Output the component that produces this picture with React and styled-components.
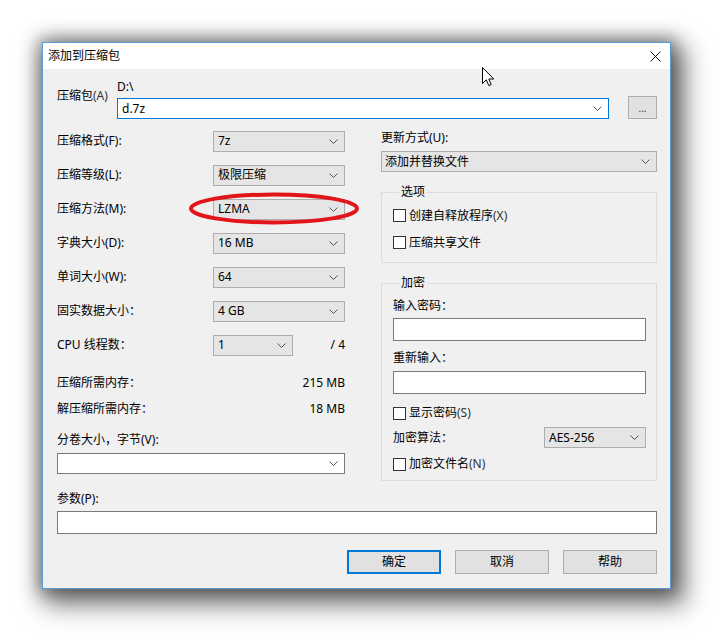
import React from 'react';
import styled, { createGlobalStyle } from 'styled-components';

const GlobalStyle = createGlobalStyle`
  html, body {
    margin: 0;
    background: #fff;
  }
  body {
    font-family: "Noto Sans", "Noto Sans CJK SC", sans-serif;
    font-size: 12px;
    color: #000;
  }
  * { box-sizing: border-box; }
`;

const Page = styled.div`
  min-height: 633px;
  padding: 42px 0 44px 42px;
`;

const Window = styled.div`
  position: relative;
  width: 629px;
  border: 1px solid #5b9bd5;
  background: #f0f0f0;
  box-shadow: 0 0 16px 4px rgba(0, 0, 0, 0.38), 8px 10px 24px 6px rgba(0, 0, 0, 0.5);
`;

const TitleBar = styled.div`
  height: 26px;
  background: #fff;
  display: flex;
  align-items: center;
  justify-content: space-between;
  padding-left: 5px;
  line-height: 16px;
`;

const CloseBox = styled.div`
  width: 30px;
  height: 26px;
  display: flex;
  align-items: center;
  justify-content: center;
`;

const Body = styled.div`
  padding: 11px 13px 14px 14px;
`;

const ArchiveRow = styled.div`
  display: flex;
  align-items: flex-start;
`;

const ArchiveLabel = styled.div`
  width: 60px;
  padding-top: 8px;
  line-height: 16px;
`;

const PathStack = styled.div`
  width: 492px;
  display: flex;
  flex-direction: column;
`;

const Drive = styled.div`
  line-height: 14px;
  height: 14px;
  margin-bottom: 4px;
`;

const Combo = styled.div`
  display: flex;
  align-items: center;
  justify-content: space-between;
  height: 21px;
  width: ${p => p.$width || '100%'};
  padding: 0 6px 0 ${p => p.$pad || 4}px;
  border: 1px solid ${p => (p.$focus ? '#0078d7' : p.$edit ? '#7a7a7a' : '#adadad')};
  background: ${p => (p.$edit ? '#fff' : '#e5e5e5')};
  line-height: 16px;
  flex-shrink: 0;
`;

const SmallButton = styled.div`
  margin: 16px 0 0 auto;
  width: 29px;
  height: 23px;
  border: 1px solid #adadad;
  background: #e1e1e1;
  display: flex;
  align-items: center;
  justify-content: center;
  font-size: 10px;
  color: #333;
`;

const Columns = styled.div`
  display: flex;
  align-items: flex-start;
  margin-top: 5px;
`;

const LeftCol = styled.div`
  width: 288px;
`;

const RightCol = styled.div`
  width: 276px;
  margin-left: auto;
`;

const FieldRow = styled.div`
  display: flex;
  align-items: center;
  height: 34px;
`;

const FieldLabel = styled.div`
  width: 156px;
  line-height: 16px;
`;

const Ratio = styled.div`
  margin-left: auto;
  line-height: 16px;
`;

const InfoRow = styled.div`
  display: flex;
  align-items: center;
  justify-content: space-between;
  height: 26px;
  line-height: 16px;
  margin-top: ${p => p.$gap || 0}px;
`;

const Caption = styled.div`
  line-height: 16px;
  margin-top: ${p => p.$gap || 0}px;
  margin-bottom: ${p => p.$after || 0}px;
`;

const Group = styled.fieldset`
  margin: ${p => p.$gap || 0}px 0 0;
  border: 1px solid #dcdcdc;
  padding: ${p => p.$padding};
  min-width: 0;
`;

const Legend = styled.legend`
  padding: 0 2px;
  margin-left: 6px;
  line-height: 16px;
`;

const CheckRow = styled.div`
  display: flex;
  align-items: center;
  height: ${p => p.$height || 20}px;
  margin-top: ${p => p.$gap || 0}px;
  line-height: 16px;
`;

const Box = styled.span`
  width: 13px;
  height: 13px;
  border: 1px solid #333;
  background: #fff;
  margin-right: 3px;
  flex-shrink: 0;
`;

const Hot = styled.span`
  color: #333;
`;

const TextInput = styled.div`
  height: ${p => p.$height || 23}px;
  border: 1px solid #7a7a7a;
  background: #fff;
  margin-top: ${p => p.$gap || 0}px;
`;

const AlgoRow = styled.div`
  display: flex;
  align-items: center;
  justify-content: space-between;
  height: 21px;
  margin-top: 4px;
  line-height: 16px;
`;

const Buttons = styled.div`
  display: flex;
  justify-content: flex-end;
  gap: 14px;
  margin-top: 16px;
`;

const Button = styled.div`
  width: 94px;
  height: 24px;
  display: flex;
  align-items: center;
  justify-content: center;
  background: #e1e1e1;
  border: ${p => (p.$primary ? '2px solid #0078d7' : '1px solid #adadad')};
  line-height: 16px;
`;

const Ellipse = styled.svg`
  position: absolute;
  left: 145px;
  top: 149px;
  pointer-events: none;
`;

const Pointer = styled.svg`
  position: absolute;
  left: 439px;
  top: 24px;
  pointer-events: none;
`;

function Chevron() {
  return (
    <svg width="9" height="5" viewBox="0 0 9 5">
      <path d="M0.5 0.5 L4.5 4.5 L8.5 0.5" fill="none" stroke="#555" strokeWidth="1" />
    </svg>
  );
}

function Select({ value, width, edit, focus, pad }) {
  return (
    <Combo $width={width} $edit={edit} $focus={focus} $pad={pad}>
      <span>{value}</span>
      <Chevron />
    </Combo>
  );
}

function Check({ label, hot, height, gap }) {
  return (
    <CheckRow $height={height} $gap={gap}>
      <Box />
      {label}
      {hot && <Hot>{hot}</Hot>}
    </CheckRow>
  );
}

const fields = [
  { label: '压缩格式(F):', value: '7z' },
  { label: '压缩等级(L):', value: '极限压缩' },
  { label: '压缩方法(M):', value: 'LZMA' },
  { label: '字典大小(D):', value: '16 MB' },
  { label: '单词大小(W):', value: '64' },
  { label: '固实数据大小：', value: '4 GB' },
];

export default function App() {
  return (
    <Page>
      <GlobalStyle />
      <Window>
        <TitleBar>
          <span>添加到压缩包</span>
          <CloseBox>
            <svg width="11" height="11" viewBox="0 0 11 11">
              <path d="M0.5 0.5 L10.5 10.5 M10.5 0.5 L0.5 10.5" stroke="#111" strokeWidth="1" />
            </svg>
          </CloseBox>
        </TitleBar>
        <Body>
          <ArchiveRow>
            <ArchiveLabel>压缩包<Hot>(A)</Hot></ArchiveLabel>
            <PathStack>
              <Drive>D:\</Drive>
              <Select value="d.7z" edit focus />
            </PathStack>
            <SmallButton>...</SmallButton>
          </ArchiveRow>

          <Columns>
            <LeftCol>
              {fields.map(f => (
                <FieldRow key={f.label}>
                  <FieldLabel>{f.label}</FieldLabel>
                  <Select value={f.value} width="132px" />
                </FieldRow>
              ))}
              <FieldRow>
                <FieldLabel>CPU 线程数：</FieldLabel>
                <Select value="1" width="80px" />
                <Ratio>/ 4</Ratio>
              </FieldRow>
              <InfoRow $gap={8}>
                <span>压缩所需内存：</span>
                <span>215 MB</span>
              </InfoRow>
              <InfoRow>
                <span>解压缩所需内存：</span>
                <span>18 MB</span>
              </InfoRow>
              <Caption $gap={10} $after={5}>分卷大小，字节(V):</Caption>
              <Select value="" edit />
            </LeftCol>

            <RightCol>
              <Caption $gap={6} $after={5}>更新方式(U):</Caption>
              <Select value="添加并替换文件" pad={3} />
              <Group $gap={12} $padding="2px 10px 6px 11px">
                <Legend>选项</Legend>
                <Check label="创建自释放程序" hot="(X)" height={27} />
                <Check label="压缩共享文件" height={27} />
              </Group>
              <Group $gap={12} $padding="7px 10px 6px 11px">
                <Legend>加密</Legend>
                <Caption>输入密码：</Caption>
                <TextInput $gap={4} />
                <Caption $gap={9}>重新输入：</Caption>
                <TextInput $gap={5} />
                <Check label="显示密码" hot="(S)" gap={9} />
                <AlgoRow>
                  <span>加密算法：</span>
                  <Select value="AES-256" width="102px" />
                </AlgoRow>
                <Check label="加密文件名" hot="(N)" gap={6} />
              </Group>
            </RightCol>
          </Columns>

          <Caption $gap={10} $after={4}>参数(P):</Caption>
          <TextInput />
          <Buttons>
            <Button $primary>确定</Button>
            <Button>取消</Button>
            <Button>帮助</Button>
          </Buttons>
        </Body>

        <Ellipse width="172" height="33" viewBox="0 0 172 33">
          <ellipse cx="86" cy="16.5" rx="83" ry="14" fill="none" stroke="#e2151b" strokeWidth="4" />
        </Ellipse>
        <Pointer width="13" height="20" viewBox="0 0 13 20">
          <path
            d="M0.5 0.5 V16.5 L4.3 12.8 L6.8 18.6 L9.2 17.6 L6.8 12 L11.8 12 Z"
            fill="#fff"
            stroke="#000"
            strokeWidth="1"
            strokeLinejoin="round"
          />
        </Pointer>
      </Window>
    </Page>
  );
}
